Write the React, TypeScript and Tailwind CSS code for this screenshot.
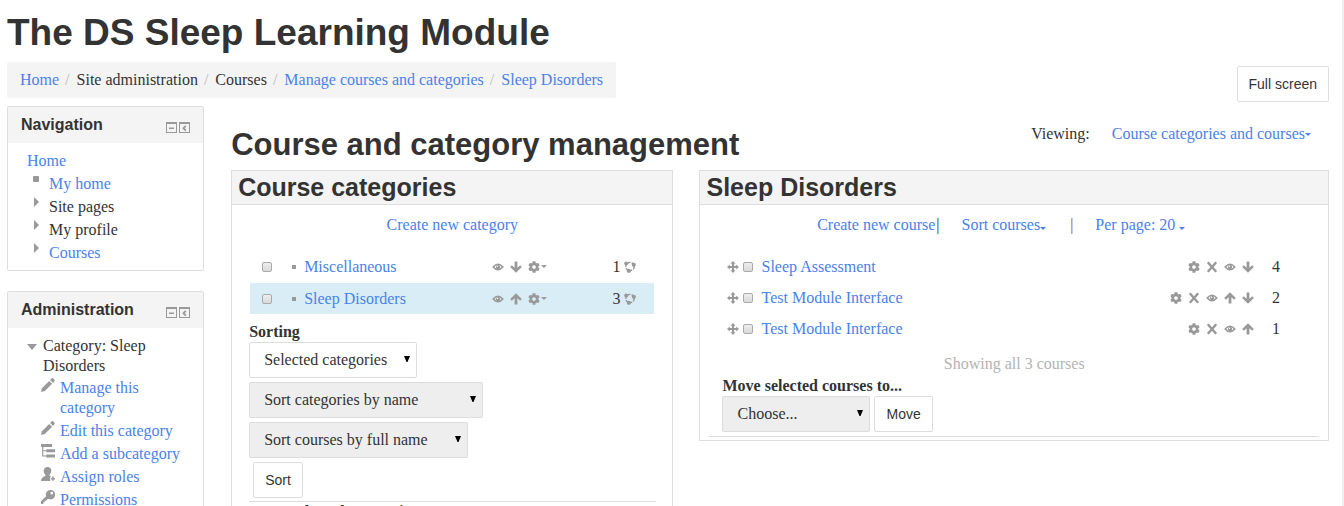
import type { ReactNode } from "react";
import { FaCog } from "react-icons/fa";
import { clsx } from "clsx";

const link = "text-[#4a82ea] hover:underline";

type IconName =
  | "eye"
  | "up"
  | "down"
  | "gear"
  | "delete"
  | "move"
  | "cohort"
  | "pencil"
  | "tree"
  | "role"
  | "key";

const drawings: Record<Exclude<IconName, "gear">, ReactNode> = {
  eye: (
    <>
      <path d="M1.2 6Q6 .6 10.8 6Q6 11.4 1.2 6Z" fill="none" stroke="currentColor" strokeWidth="1.6" />
      <circle cx="6" cy="6" r="2.2" />
      <circle cx="5.4" cy="5.300" r=".8" fill="#fff" />
    </>
  ),
  up: <path d="M6 .2L11.800 6L10.200 7.700L7.400 5.200V11.500H4.600V5.200L1.800 7.700L.2 6Z" />,
  down: <path d="M6 11.800L11.800 6L10.200 4.300L7.400 6.800V.5H4.600V6.800L1.800 4.300L.2 6Z" />,
  delete: (
    <path d="M1.800 1.200Q5 5 10.200 10.800M10.200 1.200Q7 5 1.800 10.800" stroke="currentColor" strokeWidth="2.400" fill="none" />
  ),
  move: (
    <path d="M6 0L8.500 2.800H7.100V4.900H9.200V3.500L12 6L9.200 8.500V7.100H7.100V9.200H8.500L6 12L3.500 9.200H4.900V7.100H2.800V8.500L0 6L2.800 3.500V4.900H4.900V2.800H3.500Z" />
  ),
  cohort: (
    <>
      <circle cx="6" cy="5.600" r="4.200" fill="none" stroke="currentColor" strokeWidth="1.400" strokeDasharray="3 1.200" />
      <circle cx="2.200" cy="2.600" r="2" />
      <circle cx="9.800" cy="3.800" r="2.100" />
      <circle cx="4.800" cy="9.800" r="2.100" />
    </>
  ),
  pencil: (
    <>
      <path d="M0 12L.8 8.700L7 2.500L9.500 5L3.300 11.200Z" />
      <path d="M7.800 1.700L9.200 .3Q10 -.3 11 .8Q12.200 2 11.500 2.800L10.300 4.200Z" />
    </>
  ),
  tree: (
    <>
      <path d="M0 0H9.500V2.500H0ZM4.500 4.500H12V7H4.500ZM4.500 9H12V11.500H4.500Z" />
      <path d="M1.500 2V10.300H5M1.500 5.800H5" fill="none" stroke="currentColor" />
    </>
  ),
  role: (
    <>
      <path d="M5.500 0C8 0 9 1.600 8.800 3.500C8.600 5.300 7.700 6 7.300 6.800C7.300 7.600 8 7.800 8.500 8Q7 9.500 8 12H0Q0 9 3.800 7.800V6.800C3 6 2.400 5 2.300 3.500C2.200 1.500 3.500 0 5.500 0Z" />
      <path d="M8.500 10H12M10.200 8.200V11.800" stroke="currentColor" strokeWidth="1.300" />
    </>
  ),
  key: (
    <path
      fillRule="evenodd"
      d="M8 0A4 4 0 1 1 6.300 7.500L5.200 8.200L4.400 9.200H3.200V10.500H2V12H0V9.600L4.400 5.400A4 4 0 0 1 8 0ZM9.200 1.500A1.200 1.200 0 1 0 9.300 3.900A1.200 1.200 0 0 0 9.200 1.500Z"
    />
  ),
};

function Icon({ name, large }: { name: IconName; large?: boolean }) {
  if (name === "gear") return <FaCog className="size-3 shrink-0 text-[#999]" />;
  return (
    <svg viewBox="0 0 12 12" fill="currentColor" className={clsx("shrink-0 text-[#999]", large ? "size-3.5" : "size-3")}>
      {drawings[name]}
    </svg>
  );
}

function Caret({ className }: { className?: string }) {
  return (
    <svg viewBox="0 0 6 3" fill="currentColor" className={clsx("inline-block h-[3px] w-1.5", className)}>
      <path d="M0 0H6L3 3Z" />
    </svg>
  );
}

function Block({ title, children }: { title: string; children: ReactNode }) {
  return (
    <section className="rounded-xs border border-[#ddd] bg-white">
      <header className="flex h-9 items-center justify-between bg-[#f4f4f4] pr-[13px] pl-[13px]">
        <h2 className="font-['Liberation_Sans',Arial,sans-serif] text-base font-bold">{title}</h2>
        <div className="mt-1 flex gap-0.5 text-[#999]">
          <button type="button" aria-label={`Hide ${title} block`}>
            <svg viewBox="0 0 11 11" className="size-[11px]" fill="currentColor">
              <path fillRule="evenodd" d="M0 0H11V11H0ZM1 2V10H10V2Z" />
              <path d="M3 5.500H8V7H3Z" />
            </svg>
          </button>
          <button type="button" aria-label={`Dock ${title} block`}>
            <svg viewBox="0 0 11 11" className="size-[11px]" fill="currentColor">
              <path fillRule="evenodd" d="M0 0H11V11H0ZM1 2V10H10V2Z" />
              <path d="M6.800 3.800L4.500 6.200L6.800 8.600" fill="none" stroke="currentColor" strokeWidth="1.800" />
            </svg>
          </button>
        </div>
      </header>
      <div className="px-[19px] pt-2 pb-[7px]">{children}</div>
    </section>
  );
}

function Panel({ title, children }: { title: string; children: ReactNode }) {
  return (
    <section className="border border-[#ddd]">
      <h2 className="border-b border-[#ddd] bg-[#f4f4f4] px-1.5 font-['Liberation_Sans',Arial,sans-serif] text-[25px] leading-[33px] font-bold">
        {title}
      </h2>
      {children}
    </section>
  );
}

function Button({ children, className }: { children: ReactNode; className?: string }) {
  return (
    <button
      type="button"
      className={clsx(
        "h-9 rounded-xs border border-[#ddd] bg-white px-[11px] font-['Liberation_Sans',Arial,sans-serif] text-sm",
        className,
      )}
    >
      {children}
    </button>
  );
}

function Select({ label, option, className }: { label: string; option: string; className: string }) {
  return (
    <div className={clsx("relative h-9 rounded-xs", className)}>
      <select
        aria-label={label}
        className="h-full w-full appearance-none rounded-xs border border-[#ddd] bg-inherit pr-5 pl-3.5 text-base"
      >
        <option>{option}</option>
      </select>
      <svg viewBox="0 0 6 6" className="pointer-events-none absolute top-3.5 right-[7px] size-1.5 fill-black">
        <path d="M0 0H6L3.500 6H2.500Z" />
      </svg>
    </div>
  );
}

function Checkbox({ label }: { label: string }) {
  return (
    <input
      type="checkbox"
      aria-label={label}
      className="size-2.5 shrink-0 appearance-none rounded-xs border border-[#aaa] bg-linear-to-b from-[#eee] to-[#d9d9d9]"
    />
  );
}

const navigation = [
  { label: "My home", href: "#", marker: "square" },
  { label: "Site pages", marker: "arrow" },
  { label: "My profile", marker: "arrow" },
  { label: "Courses", href: "#", marker: "arrow" },
];

const administration: { label: string; icon: IconName }[] = [
  { label: "Manage this category", icon: "pencil" },
  { label: "Edit this category", icon: "pencil" },
  { label: "Add a subcategory", icon: "tree" },
  { label: "Assign roles", icon: "role" },
  { label: "Permissions", icon: "key" },
];

const breadcrumb = [
  { label: "Home", href: "#" },
  { label: "Site administration" },
  { label: "Courses" },
  { label: "Manage courses and categories", href: "#" },
  { label: "Sleep Disorders", href: "#" },
];

const categories: { name: string; move: IconName; count: number; active?: boolean }[] = [
  { name: "Miscellaneous", move: "down", count: 1 },
  { name: "Sleep Disorders", move: "up", count: 3, active: true },
];

const courses: { name: string; actions: IconName[]; count: number }[] = [
  { name: "Sleep Assessment", actions: ["gear", "delete", "eye", "down"], count: 4 },
  { name: "Test Module Interface", actions: ["gear", "delete", "eye", "up", "down"], count: 2 },
  { name: "Test Module Interface", actions: ["gear", "delete", "eye", "up"], count: 1 },
];

function Sidebar() {
  return (
    <aside className="flex flex-col gap-5">
      <Block title="Navigation">
        <ul className="flex flex-col gap-[3px]">
          <li>
            <a href="#" className={link}>
              Home
            </a>
          </li>
          {navigation.map(({ label, href, marker }) => (
            <li key={label} className="flex pl-1.5">
              <svg viewBox="0 0 6 10" className="mr-2.5 h-2.5 w-1.5 fill-[#999]">
                {marker === "square" ? <rect y="2" width="6" height="6" rx="1" /> : <path d="M1 0L6 5L1 10Z" />}
              </svg>
              {href ? (
                <a href={href} className={link}>
                  {label}
                </a>
              ) : (
                label
              )}
            </li>
          ))}
        </ul>
      </Block>
      <Block title="Administration">
        <div className="flex">
          <svg viewBox="0 0 10 6" className="mt-2 mr-1.5 h-1.5 w-2.5 shrink-0 fill-[#999]">
            <path d="M0 0H10L5 6Z" />
          </svg>
          <span className="max-w-28">Category: Sleep Disorders</span>
        </div>
        <ul className="mt-0.5 flex flex-col gap-[3px] pl-3.5">
          {administration.map(({ label, icon }) => (
            <li key={label} className="flex gap-[5px]">
              <Icon name={icon} large />
              <a href="#" className={link}>
                {label}
              </a>
            </li>
          ))}
        </ul>
      </Block>
    </aside>
  );
}

function CategoryPanel() {
  return (
    <Panel title="Course categories">
      <div className="px-4 pt-2.5">
        <div className="text-center">
          <a href="#" className={link}>
            Create new category
          </a>
        </div>
        <ul className="mt-4 flex flex-col gap-px px-0.5">
          {categories.map(({ name, move, count, active }) => (
            <li key={name} className={clsx("flex h-[31px] items-center pr-[18px] pl-3", active && "bg-[#d9edf7]")}>
              <Checkbox label={`Select ${name}`} />
              <span className="mr-2 ml-5 size-1 bg-[#999]" />
              <a href="#" className={link}>
                {name}
              </a>
              <div className="mr-[65px] ml-auto flex items-center gap-1.5">
                <Icon name="eye" />
                <Icon name={move} />
                <span className="flex items-center gap-px text-[#999]">
                  <Icon name="gear" />
                  <Caret />
                </span>
              </div>
              <span className="mr-1">{count}</span>
              <Icon name="cohort" />
            </li>
          ))}
        </ul>
        <div className="mt-2 flex flex-col items-start gap-1 pl-px">
          <h3 className="-mb-1 font-bold">Sorting</h3>
          <Select label="Categories to sort" option="Selected categories" className="w-[168px] bg-white" />
          <Select label="Category order" option="Sort categories by name" className="w-[234px] bg-[#eee]" />
          <Select label="Course order" option="Sort courses by full name" className="w-[219px] bg-[#eee]" />
          <Button className="ml-1">Sort</Button>
        </div>
        <hr className="mt-[3px] ml-px border-[#ddd]" />
        <h3 className="pl-px font-bold">Move selected categories to</h3>
      </div>
    </Panel>
  );
}

function CoursePanel() {
  return (
    <Panel title="Sleep Disorders">
      <div className="px-[9px] pt-2.5 pb-[3px]">
        <div className="flex justify-center pr-[26px]">
          <a href="#" className={link}>
            Create new course
          </a>
          <span className="mr-[22px] ml-px">|</span>
          <a href="#" className={link}>
            Sort courses
            <Caret className="-mb-1" />
          </a>
          <span className="mr-[22px] ml-6 text-[#a3445c]">|</span>
          <a href="#" className={link}>
            Per page: 20 <Caret className="-mb-1" />
          </a>
        </div>
        <ul className="mt-4 pr-[39px] pl-[18px]">
          {courses.map(({ name, actions, count }, i) => (
            <li key={i} className="flex h-[31px] items-center">
              <Icon name="move" />
              <span className="ml-1 flex">
                <Checkbox label={`Select ${name}`} />
              </span>
              <a href="#" className={clsx(link, "ml-2")}>
                {name}
              </a>
              <div className="ml-auto flex gap-1.5">
                {actions.map((action) => (
                  <button key={action} type="button" aria-label={`${action} ${name}`}>
                    <Icon name={action} />
                  </button>
                ))}
              </div>
              <span className="ml-[18px]">{count}</span>
            </li>
          ))}
        </ul>
        <p className="mt-2.5 text-center text-[#b3b3b3]">Showing all 3 courses</p>
        <div className="mt-0.5 px-[13px]">
          <h3 className="font-bold">Move selected courses to...</h3>
          <div className="flex gap-1">
            <Select label="Move selected courses to" option="Choose..." className="w-[148px] bg-[#eee]" />
            <Button>Move</Button>
          </div>
        </div>
        <hr className="mt-1 border-[#ddd]" />
      </div>
    </Panel>
  );
}

export default function App() {
  return (
    <div className="h-screen overflow-hidden border-r-2 border-[#f0f0f0] bg-white pr-[13px] pl-[7px] font-['Liberation_Serif',Georgia,serif] text-base leading-5 text-[#333]">
      <h1 className="pt-[13px] font-['Liberation_Sans',Arial,sans-serif] text-[37px] leading-10 font-bold">
        The DS Sleep Learning Module
      </h1>
      <div className="mt-[9px] flex items-start justify-between">
        <nav aria-label="Breadcrumb" className="rounded-xs bg-[#f4f4f4] px-[13px] py-2">
          <ol className="flex">
            {breadcrumb.map(({ label, href }, i) => (
              <li key={label}>
                {i > 0 && <span className="mr-[7px] ml-1.5 text-[#bbb]">/</span>}
                {href ? (
                  <a href={href} className={link}>
                    {label}
                  </a>
                ) : (
                  label
                )}
              </li>
            ))}
          </ol>
        </nav>
        <Button className="mt-1">Full screen</Button>
      </div>
      <div className="mt-1 grid grid-cols-[197fr_1097fr] gap-[27px]">
        <Sidebar />
        <main>
          <div className="flex items-start justify-between">
            <h2 className="pt-[19px] pb-[5px] font-['Liberation_Sans',Arial,sans-serif] text-[31px] leading-10 font-bold">
              Course and category management
            </h2>
            <div className="mt-[18px] mr-[18px] flex gap-[22px]">
              <span>Viewing:</span>
              <a href="#" className={clsx(link, "flex items-center")}>
                Course categories and courses
                <Caret />
              </a>
            </div>
          </div>
          <div className="grid grid-cols-[442fr_629fr] items-start gap-[26px]">
            <CategoryPanel />
            <CoursePanel />
          </div>
        </main>
      </div>
    </div>
  );
}
